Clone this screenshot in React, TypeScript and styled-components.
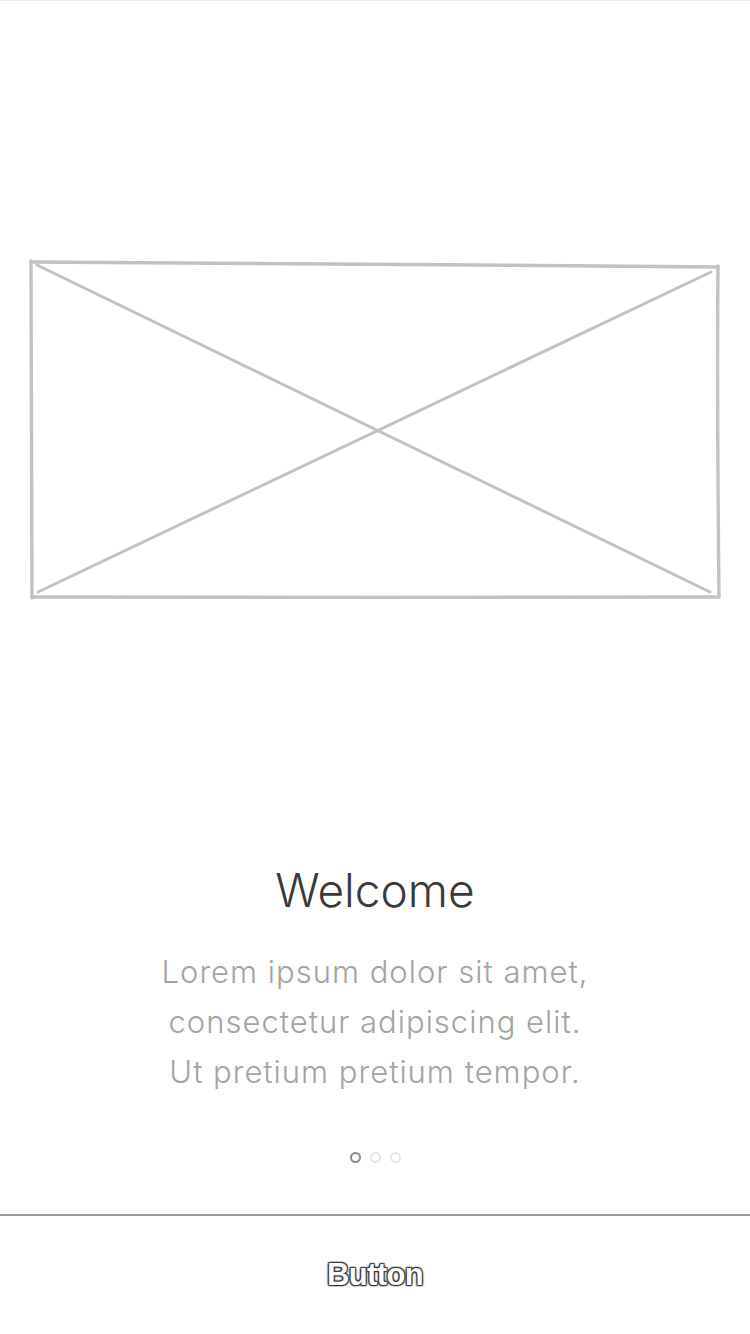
import React from "react";
import styled, { createGlobalStyle } from "styled-components";

const GlobalStyle = createGlobalStyle`
  html, body {
    margin: 0;
    padding: 0;
    background: #ffffff;
  }
  * { box-sizing: border-box; }
`;

const Page = styled.div`
  width: 750px;
  height: 1334px;
  display: flex;
  flex-direction: column;
  background: #ffffff;
  border-top: 1px solid #ececec;
  overflow: hidden;
`;

const Hero = styled.svg`
  display: block;
  margin-top: 249px;
  width: 750px;
  height: 360px;
  flex-shrink: 0;
`;

const Content = styled.main`
  flex: 1;
  display: flex;
  flex-direction: column;
  align-items: center;
`;

const Title = styled.h1`
  margin: 252px 0 0;
  font-family: Inter, "Liberation Sans", sans-serif;
  font-weight: 300;
  font-size: 46px;
  line-height: 56px;
  color: #3a3a3a;
  text-align: center;
`;

const Body = styled.p`
  margin: 29px 0 0;
  font-family: Inter, "Liberation Sans", sans-serif;
  font-weight: 300;
  font-size: 31px;
  line-height: 50px;
  letter-spacing: 1px;
  color: #a4a4a4;
  text-align: center;
`;

const Dots = styled.div`
  margin-top: 55px;
  display: flex;
  gap: 9px;
`;

const Dot = styled.span<{ $active?: boolean }>`
  width: 11px;
  height: 11px;
  border-radius: 50%;
  border: 2px solid ${(p) => (p.$active ? "#8a8a8a" : "#e6e6e6")};
`;

const Footer = styled.footer`
  height: 120px;
  flex-shrink: 0;
  border-top: 2px solid #9a9a9a;
  display: flex;
  align-items: center;
  justify-content: center;
`;

const ButtonLabel = styled.button`
  background: none;
  border: none;
  padding: 0;
  font-family: "Liberation Sans", Arial, sans-serif;
  font-weight: 700;
  font-size: 31px;
  letter-spacing: -0.6px;
  color: #ffffff;
  text-shadow: 1px 1px 1px #333, -1px -1px 1px #333, 1px -1px 1px #333,
    -1px 1px 1px #333, 0 0 3px #555;
  cursor: pointer;
`;

const stroke = "#c2c2c2";

export default function App() {
  return (
    <>
      <GlobalStyle />
      <Page>
        <Hero viewBox="0 250 750 360">
          <g fill="none" stroke={stroke} strokeLinecap="round" strokeWidth={3.4}>
            <path d="M31 262 C 200 263, 500 265, 718 267" />
            <path d="M718 266 C 717 380, 718 500, 719 596" />
            <path d="M719 597 C 500 597, 250 598, 32 597" />
            <path d="M31 261 C 31 380, 32 500, 32 598" />
          </g>
          <g fill="none" stroke={stroke} strokeLinecap="round" strokeWidth={3}>
            <path d="M37 265 L 710 592" />
            <path d="M711 272 L 38 592" />
          </g>
        </Hero>
        <Content>
          <Title>Welcome</Title>
          <Body>
            Lorem ipsum dolor sit amet,
            <br />
            consectetur adipiscing elit.
            <br />
            Ut pretium pretium tempor.
          </Body>
          <Dots>
            <Dot $active />
            <Dot />
            <Dot />
          </Dots>
        </Content>
        <Footer>
          <ButtonLabel>Button</ButtonLabel>
        </Footer>
      </Page>
    </>
  );
}
